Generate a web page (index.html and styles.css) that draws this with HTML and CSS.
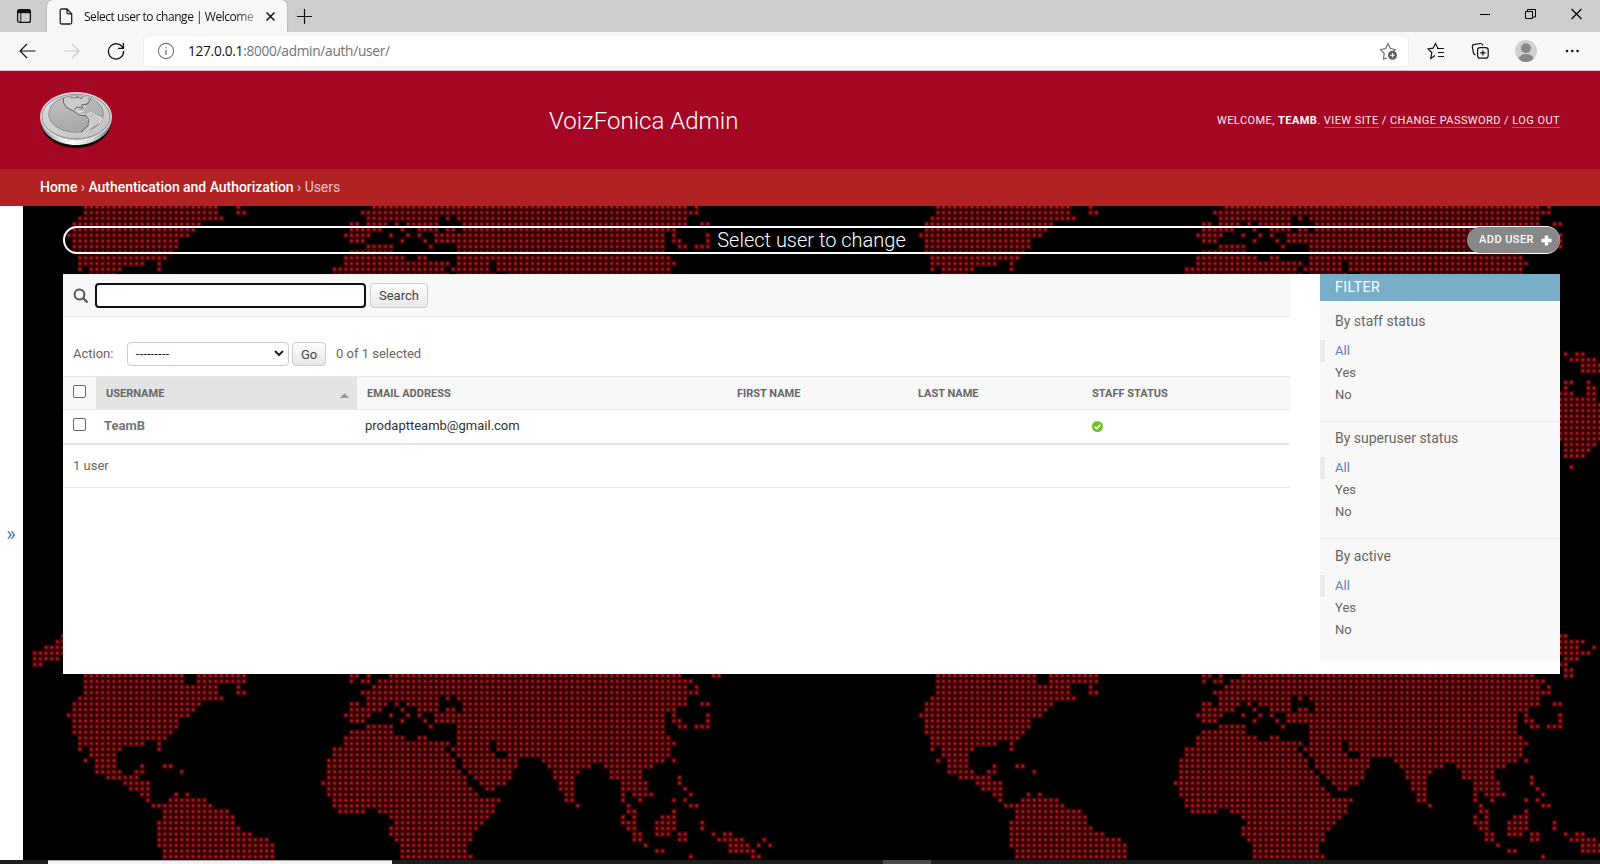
FILE: index.html
```html
<!DOCTYPE html>
<html lang="en">
<head>
<meta charset="utf-8">
<title>Select user to change | Welcome</title>
<link rel="stylesheet" href="styles.css">
</head>
<body>
<div class="tabs">
  <div class="tab-menu"><svg width="16" height="16" viewBox="0 0 16 16" fill="none" stroke="#111" stroke-width="1.3"><rect x="1.6" y="1.6" width="12.8" height="12.8" rx="2"/><path d="M2 3.4h12" stroke-width="3.6"/><path d="M4.8 5v9" stroke-width="1"/></svg></div>
  <div class="tab">
    <svg width="14" height="17" viewBox="0 0 14 17" fill="none" stroke="#222" stroke-width="1.3"><path d="M1.2 2.5q0-1.5 1.5-1.5H8l4.7 4.8v8.7q0 1.5-1.5 1.5H2.7q-1.5 0-1.5-1.5zM8 1v3.6q0 1.2 1.2 1.2h3.5"/></svg>
    <span class="tab-title">Select user to change | Welcome</span>
    <svg width="9" height="9" viewBox="0 0 9 9" stroke="#111" stroke-width="1.5"><path d="M.5.5l8 8M8.5.5l-8 8"/></svg>
  </div>
  <svg class="new-tab" width="15" height="15" viewBox="0 0 15 15" stroke="#111" stroke-width="1.2"><path d="M7.5 0v15M0 7.5h15"/></svg>
  <div class="window-buttons">
    <svg width="10" height="12" viewBox="0 0 10 12" stroke="#000"><path d="M0 6.5h10"/></svg>
    <svg width="11" height="12" viewBox="0 0 11 12" fill="none" stroke="#000"><path d="M.5 3.5h7v7h-7zM2.5 3.500v-2h8v7.500h-2.500"/></svg>
    <svg width="11" height="12" viewBox="0 0 11 12" stroke="#000" stroke-width="1.2"><path d="M.5 1l10 10M10.500 1l-10 10"/></svg>
  </div>
</div>
<div class="toolbar">
  <div class="nav">
    <svg width="17" height="16" viewBox="0 0 17 16" fill="none" stroke="#111" stroke-width="1.2"><path d="M16.500 8H1M8 1L1 8l7 7"/></svg>
    <svg width="17" height="16" viewBox="0 0 17 16" fill="none" stroke="#c8c8c8" stroke-width="1.2"><path d="M.5 8H16M9 1l7 7-7 7"/></svg>
    <svg width="18" height="18" viewBox="0 0 18 18" fill="none" stroke="#111" stroke-width="1.300"><path d="M16 6.400A7.600 7.600 0 1 0 16.600 9M16.400 1v5.400H11"/></svg>
  </div>
  <div class="address">
    <svg width="18" height="18" viewBox="0 0 18 18" fill="none" stroke="#777" stroke-width="1.1"><circle cx="9" cy="9" r="7.600"/><path d="M9 8v5M9 5v1.300" stroke-width="1.300"/></svg>
    <span class="url"><b>127.0.0.1</b>:8000/admin/auth/user/</span>
    <svg width="20" height="20" viewBox="0 0 20 20" fill="none" stroke="#666" stroke-width="1.1"><path d="M8 17l-3.500 1 .7-5.500L1.500 8.500l5.200-.9L9 2.500l2.300 5.100 5 .9-2 2"/><circle cx="13.500" cy="14.300" r="4.500" fill="#5f5f5f" stroke="none"/><path d="M13.500 12v4.600M11.200 14.300h4.600" stroke="#fff"/></svg>
  </div>
  <div class="tools">
    <svg width="18" height="18" viewBox="0 0 18 18" fill="none" stroke="#111" stroke-width="1.200"><path d="M8 13.500l-4.200 3 1-6L1 6.900l5.100-.7L8.500 1.500l2.400 4.700M10 6.500h7M11 10.500h6M11 14.500h6"/></svg>
    <svg width="18" height="18" viewBox="0 0 18 18" fill="none" stroke="#111" stroke-width="1.200"><path d="M4.500 13Q2.700 12.500 2.400 10.800L1.300 4.600Q1.200 3 2.700 2.700L9.200 1.500Q11.500 1.300 12 3.600"/><rect x="6.600" y="5.600" width="10.600" height="10.600" rx="2.500"/><path d="M11.900 8.200v5.400M9.200 10.900h5.400"/></svg>
    <svg width="22" height="22" viewBox="0 0 22 22"><circle cx="11" cy="11" r="11" fill="#d0cfcd"/><circle cx="11" cy="8.200" r="4.900" fill="#8a8886"/><path d="M3.500 18.500Q5 14 11 14t7.500 4.500Q15.500 22 11 22T3.500 18.500z" fill="#8a8886"/></svg>
    <svg width="14" height="4" viewBox="0 0 14 4" fill="#111"><circle cx="2" cy="2" r="1.300"/><circle cx="7.300" cy="2" r="1.300"/><circle cx="12.600" cy="2" r="1.300"/></svg>
  </div>
</div>

<header class="header">
  <svg class="coin" width="74" height="58" viewBox="0 0 74 58">
    <defs>
      <linearGradient id="edge"><stop offset="0" stop-color="#888"/><stop offset=".25" stop-color="#ddd"/><stop offset=".45" stop-color="#fff"/><stop offset=".75" stop-color="#ccc"/><stop offset="1" stop-color="#777"/></linearGradient>
      <linearGradient id="face" x2=".3" y2="1"><stop offset="0" stop-color="#c2c2c2"/><stop offset="1" stop-color="#a8a8a8"/></linearGradient>
      <linearGradient id="rim" x2="1" y2="1"><stop offset="0" stop-color="#dedede"/><stop offset="1" stop-color="#c0c0c0"/></linearGradient>
    </defs>
    <path d="M2 30v4c3 14 18 23 35 23s32-9 35-23v-4z" fill="#16070a"/>
    <path d="M1.500 26v4C3 44 19 54 37 54S71 44 72.500 30v-4z" fill="url(#edge)"/>
    <ellipse cx="37" cy="25.500" rx="35.500" ry="24" fill="url(#rim)" stroke="#eee" stroke-width=".8"/>
    <ellipse cx="37" cy="25.500" rx="34" ry="22.300" fill="none" stroke="#777" stroke-width=".7"/>
    <ellipse cx="37" cy="23" rx="27.300" ry="18.300" fill="url(#face)" stroke="#8a8a8a" stroke-width=".9"/>
    <path d="M24.500 8l8-3 8-.5 9 2-1 4-3 3 1.500 3-5 .5-4 2.500 4 1.500 5.500 3-6 .5-7-4.500-7-3.500-3-5zM46.500 24l5-1.500 12 5.500-3 4-6 3-5 5-7 1.500 6-6.500.500-4z" fill="#cbcbcb"/>
    <path d="M24.500 7.500v4l3 5 7 3.500 6 4 6 1M35.500 19l2-3 6 1-1-3 6-1 3-5M46.500 24l3 4.500-.5 6.500-7 6" fill="none" stroke="#4a4a4a" stroke-width=".8"/>
    <path d="M31 6l4 1M39 5l-3 2 5-1 1 2 2-3" fill="none" stroke="#555" stroke-width=".7"/>
    <path d="M47 23.500l5-2 6 4 5 1.500-3 5M38 21l7-1" fill="none" stroke="#f2f2f2" stroke-width=".8"/>
  </svg>
  <h1 class="site-name">VoizFonica Admin</h1>
  <div class="user-tools">Welcome, <strong>TeamB</strong>. <a>View site</a> / <a>Change password</a> / <a>Log out</a></div>
</header>
<nav class="breadcrumbs"><b>Home</b> › <b>Authentication and Authorization</b> › <span>Users</span></nav>

<main class="main">
  <aside class="sidebar-toggle">»</aside>
  <section class="content">
    <svg class="map" width="1577" height="654" viewBox="23 206 1577 654">
      <defs>
        <path id="land" d="
M-1-7h.01M-2-6h1.01M-4-5h3.01M-6-4h5.01M-6-3h4.01M-6-2h1.01
M3 0h17.01M23 0h8.01M3 1h17.01M23 1h8.01M3 2h23.01M30 2h.01M3 3h23.01M30 3h1.01M2 4h25.01M1 5h22.01M1 6h21.01M0 7h21.01M1 8h18.01M1 9h18.01M1 10h17.01M2 11h15.01M2 12h11.01M16 12h.01M2 13h.01M4 13h5.01M16 13h.01M4 14h4.01M3 15h.01M5 15h3.01M5 16h3.01M13 16h.01M17 16h1.01M5 17h4.01M12 17h1.01M20 17h.01M7 18h5.01M10 19h4.01M11 20h3.01M13 21h1.01M19 21h.01M21 21h.01M14 22h.01M18 22h6.01M15 23h10.01M17 24h11.01M17 25h12.01M16 26h13.01M16 27h14.01M16 28h16.01M16 29h19.01M16 30h20.01M17 31h19.01M17 32h19.01
M50 0h1.01M53 0h.01M57 0h51.01M50 1h.01M52 1h1.01M55 1h55.01M54 2h55.01M111 2h.01M52 3h57.01M110 3h1.01M53 4h12.01M67 4h.01M69 4h40.01M50 5h1.01M53 5h3.01M58 5h.01M60 5h5.01M70 5h39.01M112 5h1.01M50 6h5.01M59 6h.01M62 6h3.01M67 6h1.01M70 6h37.01M49 7h4.01M57 7h.01M60 7h.01M62 7h.01M65 7h40.01M107 7h.01M113 7h.01M50 8h2.01M59 8h.01M63 8h.01M65 8h40.01M107 8h1.01M113 8h.01M53 9h4.01M64 9h.01M69 9h36.01M108 9h1.01M111 9h2.01M50 10h7.01M69 10h36.01M49 11h10.01M62 11h1.01M69 11h37.01M49 12h18.01M69 12h5.01M76 12h31.01M47 13h19.01M68 13h6.01M76 13h30.01M47 14h20.01M69 14h6.01M78 14h28.01M46 15h22.01M70 15h9.01M84 15h21.01M107 15h.01M46 16h22.01M70 16h9.01M85 16h7.01M95 16h8.01M46 17h23.01M71 17h7.01M86 17h4.01M96 17h5.01M46 18h24.01M72 18h6.01M86 18h3.01M96 18h5.01M108 18h.01M45 19h25.01M73 19h4.01M87 19h2.01M98 19h4.01M108 19h.01M46 20h25.01M74 20h1.01M87 20h2.01M98 20h4.01M109 20h.01M46 21h26.01M88 21h1.01M98 21h.01M100 21h3.01M110 21h.01M47 22h29.01M88 22h1.01M98 22h.01M101 22h.01M107 22h.01M109 22h.01M47 23h28.01M90 23h.01M99 23h.01M110 23h1.01M48 24h4.01M55 24h20.01M99 24h1.01M107 24h.01M57 25h17.01M98 25h.01M100 25h.01M105 25h2.01M58 26h15.01M98 26h2.01M104 26h3.01M112 26h.01M57 27h15.01M99 27h1.01M104 27h3.01M112 27h.01M57 28h14.01M100 28h1.01M104 28h2.01M108 28h1.01M58 29h13.01M100 29h1.01M108 29h1.01M59 30h11.01M102 30h.01M59 31h11.01M104 31h1.01M59 32h12.01M110 32h.01
M113-7h1.01M113-6h4.01M113-5h3.01M119-5h.01M113-4h5.01M114-3h2.01M113-2h1.01M114-1h1.01M114 0h1.01M114 28h.01M116 28h1.01M115 29h4.01M123 29h.01M117 30h3.01M122 30h.01M124 30h.01M117 31h4.01M121 32h1.01M114 33h1.01M118 33h.01M114 34h.01M118 34h1.01M113 35h2.01M118 35h1.01M113 36h6.01M113 37h7.01M113 38h7.01M113 39h7.01M113 40h7.01M113 41h7.01M113 42h7.01M113 43h7.01M114 44h5.01M114 45h4.01M114 46h3.01M115 48h.01"/>
        <g id="tile" transform="translate(68.7 675.7) scale(5.656)" fill="none">
          <use href="#land" class="land-glow"/>
          <use href="#land" class="land-halo"/>
          <use href="#land" class="land-dots"/>
        </g>
      </defs>
      <use href="#tile"/><use href="#tile" x="852.3"/>
      <use href="#tile" y="-480"/><use href="#tile" x="852.3" y="-480"/>
    </svg>
    <div class="title-bar">
      <h2>Select user to change</h2>
      <a class="add-user">Add user <svg width="11" height="11" viewBox="0 0 11 11" stroke="#fff" stroke-width="3.400"><path d="M5.500.5v10M.5 5.500h10"/></svg></a>
    </div>
    <div class="panel">
      <div class="changelist">
        <div class="search">
          <svg width="16" height="16" viewBox="0 0 16 16" fill="none" stroke="#555"><circle cx="6.500" cy="6.500" r="4.900" stroke-width="2"/><path d="M10 10l4.500 4.500" stroke-width="2.300"/></svg>
          <input type="text" class="search-input"><button class="btn">Search</button>
        </div>
        <div class="actions">
          <span class="label">Action:</span>
          <span class="select"><span class="dashes">---------</span><svg width="10" height="7" viewBox="0 0 10 7" fill="none" stroke="#222" stroke-width="2"><path d="M1 1l4 4 4-4"/></svg></span>
          <button class="btn go">Go</button>
          <span>0 of 1 selected</span>
        </div>
        <div class="row head">
          <div class="check"><i></i></div>
          <div class="sorted">Username <svg width="9" height="5" viewBox="0 0 9 5"><path d="M0 5L4.500 0 9 5z" fill="#999"/></svg></div>
          <div>Email address</div><div>First name</div><div>Last name</div><div>Staff status</div>
        </div>
        <div class="row data">
          <div class="check"><i></i></div>
          <div class="username">TeamB</div>
          <div class="email">prodaptteamb@gmail.com</div><div></div><div></div>
          <div class="status"><svg width="11" height="11" viewBox="0 0 11 11"><circle cx="5.500" cy="5.500" r="5.500" fill="#70bf2b"/><path d="M2.700 5.600l2 2 3.600-3.700" fill="none" stroke="#fff" stroke-width="1.600"/></svg></div>
        </div>
        <div class="count">1 user</div>
      </div>
      <aside class="filter">
        <h2>Filter</h2>
        <div class="group"><h3>By staff status</h3><ul><li class="on">All</li><li>Yes</li><li>No</li></ul></div>
        <div class="group"><h3>By superuser status</h3><ul><li class="on">All</li><li>Yes</li><li>No</li></ul></div>
        <div class="group last"><h3>By active</h3><ul><li class="on">All</li><li>Yes</li><li>No</li></ul></div>
      </aside>
    </div>
  </section>
</main>
<footer class="taskbar"><div class="task-search"></div><div class="task-active"></div></footer>
</body>
</html>
```
FILE: styles.css
```css
* { box-sizing: border-box; }
body { margin: 0; width: 1600px; height: 864px; overflow: hidden; font-family: Roboto, "Liberation Sans", sans-serif; font-size: 13px; color: #666; background: #fff; display: flex; flex-direction: column; }
svg { display: block; flex: none; }
h1, h2, h3, ul { margin: 0; padding: 0; font-weight: 400; list-style: none; }

/* Browser chrome */
.tabs { height: 32px; flex: none; display: flex; align-items: center; background: #cdcdcd; }
.tab-menu { width: 47px; padding-left: 16px; }
.tab { width: 240px; height: 32px; background: #f7f7f7; border-radius: 6px 6px 0 0; display: flex; align-items: center; padding: 0 12px 0 12px; box-shadow: 0 0 2px #999; clip-path: inset(0 -3px 0 -3px); }
.tab-title { width: 175px; margin: 0 9px 0 11px; font: 12px "Open Sans", sans-serif; letter-spacing: -.46px; color: #111; white-space: nowrap; -webkit-mask-image: linear-gradient(90deg, #000 88%, rgba(0, 0, 0, .3)); mask-image: linear-gradient(90deg, #000 88%, rgba(0, 0, 0, .3)); }
.new-tab { margin-left: 10px; }
.window-buttons { margin-left: auto; display: flex; gap: 35px; padding: 0 18px 4px 0; }
.toolbar { height: 39px; flex: none; background: #f7f7f7; border-bottom: 1px solid #e8bcc4; display: flex; align-items: center; }
.nav { width: 144px; display: flex; align-items: center; gap: 27px; padding-left: 19px; }
.address { width: 1264px; height: 30px; background: #fff; border-radius: 4px; display: flex; align-items: center; padding: 0 9px 0 13px; box-shadow: 0 0 2px #ddd; }
.url { flex: 1; margin-left: 13px; padding-bottom: 1px; font: 13.7px "Open Sans", sans-serif; letter-spacing: -.29px; color: #737373; }
.url b { font-weight: 400; color: #111; }
.tools { display: flex; align-items: center; padding-left: 19px; }
.tools svg { margin-right: 26px; }
.tools svg:nth-child(3) { margin-right: 28px; }
.tools svg:last-child { margin: 0; }

/* Site header */
.header { height: 98px; flex: none; background: #a40624; color: #ffe9ee; display: flex; align-items: center; padding: 0 40px 0 39px; }
.site-name { margin-left: 436px; font-size: 24px; font-weight: 300; color: #fff; padding-top: 1px; }
.user-tools { margin-left: auto; font-size: 11px; font-weight: 400; letter-spacing: .44px; text-transform: uppercase; }
.user-tools strong { color: #fff; font-weight: 700; }
.user-tools a { border-bottom: 1px solid rgba(255, 255, 255, .3); }
.breadcrumbs { height: 37px; flex: none; background: #b22222; color: #c4dce8; font-size: 14px; letter-spacing: -.04px; line-height: 36px; padding-left: 40px; }
.breadcrumbs b { color: #fff; font-weight: 500; }
.breadcrumbs span { color: #e5c3d8; }

/* Page */
.main { height: 654px; flex: none; display: flex; }
.sidebar-toggle { width: 23px; display: flex; align-items: center; justify-content: center; font-size: 20px; color: #447e9b; padding: 2px 1px 0 0; }
.content { flex: 1; position: relative; background: #000; padding: 20px 40px 0; }
.map { position: absolute; left: 0; top: 0; }
.land-glow { stroke: #350002; stroke-width: 1; stroke-linecap: square; }
.land-halo { stroke: #680a0e; stroke-width: .74; stroke-linecap: round; stroke-dasharray: 0 1; }
.land-dots { stroke: #ab1a22; stroke-width: .42; stroke-linecap: round; stroke-dasharray: 0 1; }
.title-bar { position: relative; height: 28px; border: 2px solid #fff; border-radius: 14px; }
.title-bar h2 { font-size: 20px; font-weight: 300; color: #fff; text-align: center; line-height: 24px; }
.add-user { position: absolute; right: -2px; top: -1px; width: 93px; height: 26px; border-radius: 13px; background: #888; color: #fff; font-size: 11px; font-weight: 500; letter-spacing: .45px; text-transform: uppercase; display: flex; align-items: center; justify-content: space-between; padding: 0 8px 1px 12px; }
.add-user svg { margin-top: 2px; }
.panel { position: relative; height: 400px; margin-top: 20px; background: #fff; display: flex; justify-content: space-between; }
.changelist { width: 1227px; }
.search { height: 43px; background: #f8f8f8; border-top: 1px solid #eee; border-bottom: 1px solid #e8e8e8; display: flex; align-items: center; padding-left: 10px; }
.search svg { margin-right: 6px; }
.search-input { width: 271px; height: 25px; border: 2px solid #101010; border-radius: 4px; background: #fff; }
.btn { height: 25px; padding: 0 8px; margin-left: 4px; border: 1px solid #ccc; border-radius: 4px; background: linear-gradient(#fdfdfd, #e8e8e8); font: 13px Roboto, sans-serif; color: #444; }
.actions { height: 59px; display: flex; align-items: center; padding: 14px 0 0 10px; }
.actions .label { width: 54px; }
.select { width: 162px; height: 24px; border: 1px solid #ccc; border-radius: 4px; display: flex; align-items: center; justify-content: space-between; padding: 0 4px 0 8px; color: #222; }
.dashes { letter-spacing: .4px; font-size: 12px; }
.go { margin: 0 10px 0 3px; height: 24px; padding: 1px 8px 0; width: 34px; }
.row { display: grid; grid-template-columns: 33px 261px 370px 181px 174px 208px; align-items: center; }
.row > div { padding-left: 10px; }
.head { height: 34px; background: #f8f8f8; border: 1px solid #e8e8e8; border-width: 1px 0; font-size: 11px; font-weight: 700; text-transform: uppercase; }
.head > .sorted { height: 32px; background: #e3e3e3; display: flex; align-items: center; justify-content: space-between; padding-right: 8px; }
.sorted svg { margin-top: 5px; }
.check i { display: block; width: 13px; height: 13px; margin-bottom: 3px; border: 1px solid #666; border-radius: 2px; background: #fff; }
.data { height: 35px; padding-bottom: 2px; border-bottom: 2px solid #e8e8e8; color: #333; }
.row > .username { padding-left: 8px; font-weight: 700; color: #777; }
.row > .email { padding-left: 8px; }
.row > .status { padding-top: 2px; }
.count { height: 43px; line-height: 42px; padding-left: 10px; border-bottom: 1px solid #e8e8e8; }

.filter { width: 240px; height: 387px; background: #f8f8f8; }
.filter h2 { height: 27px; background: #79aec8; color: #fff; font-size: 14px; letter-spacing: .5px; text-transform: uppercase; line-height: 27px; padding-left: 15px; }
.group { height: 117px; border-bottom: 1px solid #eaeaea; }
.filter h2 + .group { height: 121px; padding-top: 4px; }
.group.last { border: 0; padding-top: 1px; }
.group h3 { height: 35px; font-size: 14px; line-height: 33px; padding-left: 15px; }
.group li { height: 22px; line-height: 22px; padding-left: 15px; }
.group .on { border-left: 5px solid #eaeaea; padding-left: 10px; color: #5b7cb5; }

.taskbar { height: 4px; flex: none; display: flex; background: #1e1e1e; }
.task-search { width: 344px; margin-left: 48px; background: #f3f3f3; border-top: 1px solid #aaa; }
.task-active { width: 48px; margin-left: 491px; background: #4a4a4a; }
```
